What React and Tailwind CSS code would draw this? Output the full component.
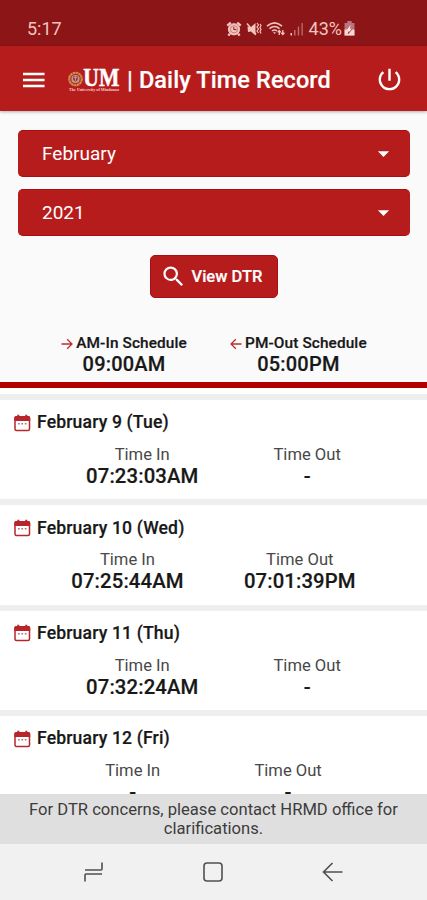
import React from 'react';
import { MdPowerSettingsNew, MdSearch, MdArrowDropDown } from 'react-icons/md';

const records = [
  { date: 'February 9 (Tue)', timeIn: '07:23:03AM', timeOut: '-' },
  { date: 'February 10 (Wed)', timeIn: '07:25:44AM', timeOut: '07:01:39PM' },
  { date: 'February 11 (Thu)', timeIn: '07:32:24AM', timeOut: '-' },
  { date: 'February 12 (Fri)', timeIn: '-', timeOut: '-' },
];

const AlarmIcon = () => (
  <svg width="16" height="16" viewBox="0 0 16 16" fill="none" stroke="#f3c4bd">
    <circle cx="8" cy="8.3" r="5.6" fill="#f3c4bd" />
    <path d="M1.3 4.6 4.8 1.6M14.7 4.6 11.2 1.6M3.8 12.6 2.4 14.6M12.2 12.6l1.4 2" strokeWidth="2.4" />
    <circle cx="8" cy="8.3" r="3.6" stroke="#a84a48" strokeWidth=".6" />
    <path d="M7.8 6v2.6h2.6" stroke="#8c1518" strokeWidth="1" />
  </svg>
);

const MuteIcon = () => (
  <svg width="16" height="16" viewBox="0 0 16 16" fill="none" stroke="#f3c4bd">
    <path d="M1.5 5.5 4.5 6.5 9.5 2v12.500L5 10.500 2 11z" fill="#f3c4bd" stroke="none" />
    <path d="M1 2.500 10 13.500" strokeWidth="1.500" />
    <path d="m11 2 1.500 2L11 6l1.500 2L11 10l1.500 2M14 3l1 1.500L14 6.500l1 2-1 2 1 2" strokeWidth="1.200" />
  </svg>
);

const WifiIcon = () => (
  <svg width="20" height="16" viewBox="0 0 20 16" fill="none" stroke="#f3c4bd" strokeWidth="1.6">
    <path d="M1 5.2Q8.5-1.6 16 5.2M3.500 7.600q5-4.200 10 0M6 10q2.500-2 5 0" />
    <path d="M7 11.200h3L8.500 13z" fill="#f3c4bd" stroke="none" />
    <path d="M13.300 14V9.500m-1.600 1.800 1.600-1.800 1.500 1.800M16.800 9v4.500m-1.500-1.700 1.500 1.700 1.600-1.700" strokeWidth="1.300" />
  </svg>
);

const SignalIcon = () => (
  <svg width="14" height="14" viewBox="0 0 14 14" fill="#f3c4bd">
    <path d="M.5 11h1.500v2.500H.5z" />
    <path d="M4 8h1.500v5.500H4zM7.800 4.500h1.400v9H7.800zM11.500 1h1.300v12.500h-1.300z" opacity=".5" />
  </svg>
);

const BatteryIcon = () => (
  <svg width="11" height="15" viewBox="0 0 10 15" preserveAspectRatio="none">
    <path d="M3 0h4v2h2.500v12.500h-9V2H3z" fill="#bd747d" />
    <path d="M.5 8.500h9v6h-9z" fill="#f7d9d4" />
    <path d="M6 4 2.500 9h2.200l-.8 3.700L7.500 7.700H5.200z" fill="#fbe8e4" />
    <path d="M7.500 7.700 3.900 12.700 4.400 10.500" fill="none" stroke="#8c1518" strokeWidth=".7" />
  </svg>
);

const MenuIcon = () => (
  <svg width="28" height="28" viewBox="0 0 28 28" fill="currentColor">
    <path d="M3 6.700h21.500v2.600H3zM3 12.700h21.500v2.600H3zM3 18.700h21.500v2.600H3z" />
  </svg>
);

const CalendarIcon = () => (
  <svg width="17" height="18" viewBox="0 0 17 18" fill="none">
    <rect x="1" y="2.800" width="14.500" height="13.700" rx="1.500" stroke="#b7262a" strokeWidth="1.500" />
    <path d="M.3 7V3.800q0-1.700 1.700-1.700h12.500q1.700 0 1.700 1.700V7z" fill="#b7262a" />
    <path d="M4.300.8v3M12.300.8v3" stroke="#b7262a" strokeWidth="2" />
    <path d="M4 9.800h1.700M7.400 9.800h1.700M10.800 9.800h1.700" stroke="#c96a6c" strokeWidth="1.500" />
  </svg>
);

const Logo = () => (
  <svg width="52" height="28" viewBox="0 -3 52 28">
    <circle cx="7.500" cy="10" r="6.300" fill="#a6322a" stroke="#d18f48" strokeWidth="2" strokeDasharray="2.500 .4" />
    <circle cx="7.500" cy="10" r="4.100" fill="#cf9488" />
    <path d="M5 7.500h5l-.4 3.400-2.100 1.900-2.100-1.900z" fill="#813447" />
    <path d="M5.800 8.700h3.500M7.500 7.700v4" stroke="#edc07b" strokeWidth=".7" />
    <text x="15.300" y="17.200" fontFamily="Liberation Serif, serif" fontWeight="700" fontSize="24.500" textLength="36" lengthAdjust="spacingAndGlyphs" fill="#fff" stroke="#fff" strokeWidth=".5">UM</text>
    <text x="1" y="21.800" fontFamily="Liberation Serif, serif" fontWeight="700" fontSize="4.500" textLength="50" lengthAdjust="spacingAndGlyphs" fill="#f3cfc9">The University of Mindanao</text>
  </svg>
);

const Arrow = ({ left }) => (
  <svg width="12" height="12" viewBox="0 0 12 12" className={left ? 'rotate-180' : ''} fill="none" stroke="#bd2c31" strokeWidth="1.3">
    <path d="M.5 6h10.500M6.200 1.200 11 6l-4.800 4.800" />
  </svg>
);

const Select = ({ value }) => (
  <div className="flex h-[47px] items-center justify-between rounded-[5px] border-y border-[#ad0d11] bg-[#b71c1c] pl-6 pr-[13px] text-white">
    <span className="pt-[2px] text-[19px]">{value}</span>
    <MdArrowDropDown size={27} />
  </div>
);

const Schedule = ({ label, time, left }) => (
  <div className="flex flex-col items-center">
    <div className="flex h-5 items-center gap-[3px] pt-px text-[15.4px] font-medium tracking-[0.1px] [-webkit-text-stroke:0.2px]">
      <Arrow left={left} />
      {label}
    </div>
    <div className="text-[20px] font-medium leading-[23px] tracking-[0.2px] [-webkit-text-stroke:0.2px]">{time}</div>
  </div>
);

const TimeCell = ({ label, time }) => (
  <div className="flex flex-col items-center">
    <div className="text-[16.6px] leading-5 text-[#484848]">{label}</div>
    <div className="text-[20.3px] font-medium leading-[23px] tracking-[0.12px] [-webkit-text-stroke:0.2px]">{time}</div>
  </div>
);

const RecordCard = ({ date, timeIn, timeOut }) => (
  <div className="h-[105.4px] shrink-0 border-t-[6px] border-[#eeeeee] bg-white pt-[13px]">
    <div className="flex h-[19px] items-center gap-[6px] pl-[14px] text-[17.6px] font-medium tracking-[0.14px] [-webkit-text-stroke:0.2px]">
      <CalendarIcon />
      {date}
    </div>
    <div className="mt-[13px] flex justify-evenly px-[11px]">
      <TimeCell label="Time In" time={timeIn} />
      <TimeCell label="Time Out" time={timeOut} />
    </div>
  </div>
);

const App = () => {
  return (
    <div className="flex h-[900px] w-[427px] flex-col overflow-hidden bg-[#fafafa] font-['Roboto',sans-serif] text-[#181818]">
      {/* Status bar */}
      <div className="flex h-[46px] shrink-0 items-center bg-[#8c1518] pl-[27px] pr-[72px] pt-[11px] text-[18px] text-[#f3c4bd]">
        <span>5:17</span>
        <div className="ml-auto flex items-center">
          <AlarmIcon />
          <span className="ml-1"><MuteIcon /></span>
          <span className="ml-1"><WifiIcon /></span>
          <span className="ml-1"><SignalIcon /></span>
          <span className="ml-[5px]">43%</span>
          <span className="ml-[2px]"><BatteryIcon /></span>
        </div>
      </div>

      {/* App bar */}
      <header className="z-10 flex h-[65px] shrink-0 items-center bg-[#b71c1c] pl-5 pr-[23px] pt-[2px] text-white shadow-[0_1px_3px_rgba(0,0,0,0.3)]">
        <MenuIcon />
        <div className="ml-5"><Logo /></div>
        <h1 className="ml-[7px] whitespace-nowrap pt-[2px] text-[23.5px] font-medium tracking-[0.1px] [-webkit-text-stroke:0.2px]">| Daily Time Record</h1>
        <MdPowerSettingsNew size={29} className="ml-auto" />
      </header>

      {/* Filters */}
      <div className="flex shrink-0 flex-col gap-3 pl-[18px] pr-[17px] pt-[19px]">
        <Select value="February" />
        <Select value="2021" />
      </div>
      <button className="mx-auto mt-[19px] flex h-[43px] w-[128px] shrink-0 items-center gap-[5px] rounded-[5px] border border-[#ad0d11] bg-[#b71c1c] pl-[9px] text-white">
        <MdSearch size={27} />
        <span className="whitespace-nowrap pt-px text-[16.5px] font-medium [-webkit-text-stroke:0.2px]">View DTR</span>
      </button>

      <div className="mt-[35px] flex shrink-0 justify-evenly border-b-[6px] border-[#b20000] pl-[18px] pr-[17px] pb-[6px]">
        <Schedule label="AM-In Schedule" time="09:00AM" />
        <Schedule label="PM-Out Schedule" time="05:00PM" left />
      </div>

      {/* Daily records */}
      <main className="flex min-h-0 flex-1 flex-col overflow-hidden bg-[#fefefc] pt-[6px]">
        {records.map((record) => (
          <RecordCard key={record.date} {...record} />
        ))}
      </main>

      <footer className="h-[50px] shrink-0 bg-[#dfdfdf] px-5 pt-[6px] text-center text-[16.6px] leading-[19px] text-[#3c3c3c]">
        For DTR concerns, please contact HRMD office for clarifications.
      </footer>

      {/* Android navigation */}
      <nav className="flex h-14 shrink-0 items-center justify-between bg-[#f1f1f1] pl-[83px] pr-[84px] text-[#505050]">
        <svg width="21" height="20" viewBox="0 0 21 20" fill="none" stroke="currentColor" strokeWidth="1.6">
          <path d="M2 8h16q1 0 1-1V.5M19 12H3q-1 0-1 1v6.500" />
        </svg>
        <svg width="22" height="20" viewBox="0 0 22 20" fill="none" stroke="currentColor" strokeWidth="1.6">
          <rect x="2" y="1" width="18" height="18" rx="3" />
        </svg>
        <svg width="21" height="20" viewBox="0 0 21 20" fill="none" stroke="currentColor" strokeWidth="1.6">
          <path d="M20.500 10H2M10.500 1 1.500 10l9 9" />
        </svg>
      </nav>
    </div>
  );
};

export default App;
